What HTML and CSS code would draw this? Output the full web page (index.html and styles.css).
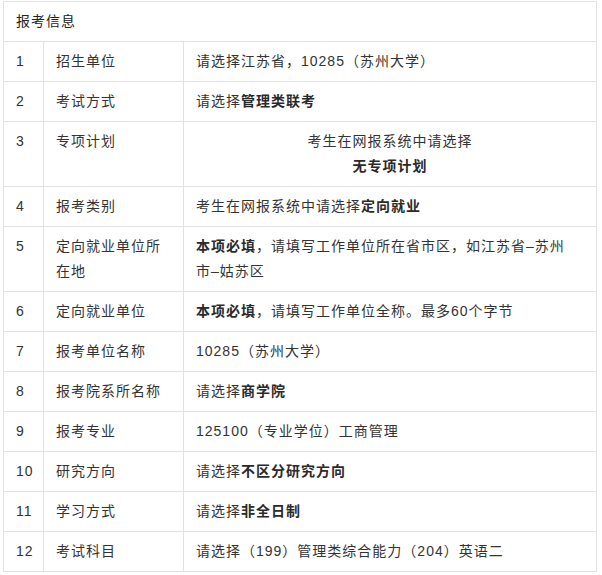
FILE: index.html
```html
<!DOCTYPE html>
<html lang="zh-CN">
<head>
<meta charset="utf-8">
<title>报考信息</title>
<link rel="stylesheet" href="styles.css">
</head>
<body>
<div class="wrap">
<table class="info">
  <colgroup>
    <col class="c-num">
    <col class="c-name">
    <col class="c-val">
  </colgroup>
  <tr><td class="head" colspan="3">报考信息</td></tr>
  <tr><td>1</td><td>招生单位</td><td>请选择江苏省，10285（苏州大学）</td></tr>
  <tr><td>2</td><td>考试方式</td><td>请选择<b>管理类联考</b></td></tr>
  <tr><td>3</td><td>专项计划</td><td class="center">考生在网报系统中请选择<br><b>无专项计划</b></td></tr>
  <tr><td>4</td><td>报考类别</td><td>考生在网报系统中请选择<b>定向就业</b></td></tr>
  <tr><td>5</td><td>定向就业单位所在地</td><td><b>本项必填</b>，请填写工作单位所在省市区，如江苏省–苏州市–姑苏区</td></tr>
  <tr><td>6</td><td>定向就业单位</td><td><b>本项必填</b>，请填写工作单位全称。最多60个字节</td></tr>
  <tr><td>7</td><td>报考单位名称</td><td>10285（苏州大学）</td></tr>
  <tr><td>8</td><td>报考院系所名称</td><td>请选择<b>商学院</b></td></tr>
  <tr><td>9</td><td>报考专业</td><td>125100（专业学位）工商管理</td></tr>
  <tr><td>10</td><td>研究方向</td><td>请选择<b>不区分研究方向</b></td></tr>
  <tr><td>11</td><td>学习方式</td><td>请选择<b>非全日制</b></td></tr>
  <tr><td>12</td><td>考试科目</td><td>请选择（199）管理类综合能力（204）英语二</td></tr>
</table>
</div>
</body>
</html>
```

FILE: styles.css
```css
html, body {
  margin: 0;
  padding: 0;
  background: #ffffff;
}

.wrap {
  padding: 1px 5px 0 3px;
}

.info {
  width: 594px;
  border-collapse: collapse;
  table-layout: fixed;
  font-family: "Liberation Sans", "Noto Sans CJK SC", sans-serif;
  font-size: 14px;
  line-height: 25px;
  letter-spacing: 1px;
  color: #333333;
}

.c-num { width: 40px; }
.c-name { width: 140px; }

.info td {
  border: 1px solid #e2e2e2;
  padding: 7px 16px 7px 12px;
  vertical-align: top;
  text-align: left;
}

.info td.head {
  color: #222222;
}

.info td.center {
  text-align: center;
  padding-left: 12px;
  padding-right: 12px;
}

.info b {
  font-weight: bold;
  color: #2a2a2a;
}
```
